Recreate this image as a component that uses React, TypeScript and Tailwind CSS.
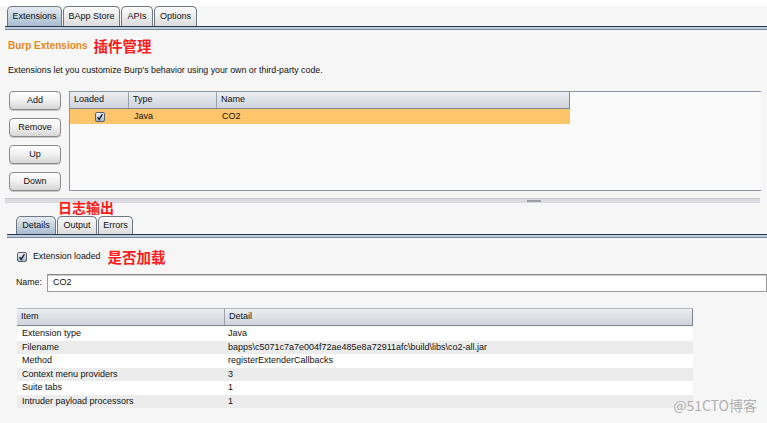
import React from "react";

const font = { fontFamily: '"Liberation Sans", Arial, "Noto Sans CJK SC", sans-serif' };
const cjk = { fontFamily: '"Noto Sans CJK SC", sans-serif' };

function Check() {
  return (
    <svg width="10" height="10" viewBox="0 0 10 10">
      <defs>
        <linearGradient id="cb" x1="0" y1="0" x2="0" y2="1">
          <stop offset="0" stopColor="#f4f7fb" />
          <stop offset="1" stopColor="#9fb3c9" />
        </linearGradient>
      </defs>
      <rect x="0.5" y="0.5" width="9" height="9" rx="1.5" fill="url(#cb)" stroke="#55606e" />
      <path d="M2.6 5.2 L4.2 7.4 L7.4 2.2" fill="none" stroke="#1a1f26" strokeWidth="1.4" />
    </svg>
  );
}

function Tab({ label, active, w }: { label: string; active?: boolean; w: string }) {
  return (
    <div
      className={`${w} h-full flex items-center justify-center rounded-t-[5px] border border-b-0 border-[#6f7782] text-[9px] text-[#111] ${
        active ? "bg-gradient-to-b from-[#e6ecf2] to-[#a7bbd0]" : "bg-gradient-to-b from-[#fbfbfb] to-[#dcdcdc]"
      }`}
    >
      {label}
    </div>
  );
}

function Btn({ label }: { label: string }) {
  return (
    <div className="w-[52px] h-[19px] rounded-[4px] border border-[#8a8a8a] bg-gradient-to-b from-[#ffffff] via-[#f0f0f0] to-[#d6d6d6] flex items-center justify-center text-[9px] text-[#111] shadow-[0_1px_0_#c8c8c8]">
      {label}
    </div>
  );
}

const rows: [string, string][] = [
  ["Extension type", "Java"],
  ["Filename", "bapps\\c5071c7a7e004f72ae485e8a72911afc\\build\\libs\\co2-all.jar"],
  ["Method", "registerExtenderCallbacks"],
  ["Context menu providers", "3"],
  ["Suite tabs", "1"],
  ["Intruder payload processors", "1"],
];

export default function App() {
  return (
    <div className="w-[767px] h-[423px] overflow-hidden bg-[#f6f6f6] relative text-[#111]" style={font}>
      <div className="h-[6px] bg-white" />
      {/* top tabs */}
      <div className="h-[20px] flex items-end pl-[7px] gap-[1px]">
        <Tab label="Extensions" active w="w-[55px]" />
        <Tab label="BApp Store" w="w-[57px]" />
        <Tab label="APIs" w="w-[32px]" />
        <Tab label="Options" w="w-[43px]" />
      </div>
      <div className="ml-[5px] h-[4px] border-t border-[#2e3846] bg-[#b9cde2] border-b border-b-[#7d8796]" />

      {/* header */}
      <div className="mt-[7px] pl-[8px] flex items-center h-[17px]">
        <span className="text-[10px] font-bold text-[#e5881c]">Burp Extensions</span>
        <span className="ml-[5px] text-[14.5px] leading-[16px] font-bold text-[#ff1a1a] bg-white px-[1px]" style={cjk}>
          插件管理
        </span>
      </div>
      <div className="mt-[11px] pl-[8px] text-[8.8px] leading-[10px]">
        Extensions let you customize Burp's behavior using your own or third-party code.
      </div>

      {/* main area */}
      <div className="mt-[16px] flex">
        <div className="ml-[9px] flex flex-col gap-[8px]">
          <Btn label="Add" />
          <Btn label="Remove" />
          <Btn label="Up" />
          <Btn label="Down" />
        </div>
        <div className="ml-[8px] w-[692px] h-[100px] border border-[#8f95a0] border-r-0 bg-[#fafafa]">
          <div className="w-[500px] h-[17px] flex text-[9px] bg-gradient-to-b from-[#eceef2] to-[#cfd3db] border-b border-r border-[#80868f]">
            <div className="w-[59px] pl-[4px] flex items-center border-r border-[#9aa0aa]">Loaded</div>
            <div className="w-[88px] pl-[4px] flex items-center border-r border-[#9aa0aa]">Type</div>
            <div className="flex-1 pl-[4px] flex items-center">Name</div>
          </div>
          <div className="w-[500px] h-[15px] flex items-center text-[9px] bg-[#ffc56b]">
            <div className="w-[59px] flex justify-center">
              <Check />
            </div>
            <div className="w-[88px] pl-[5px]">Java</div>
            <div className="flex-1 pl-[5px]">CO2</div>
          </div>
        </div>
      </div>

      {/* splitter */}
      <div className="mt-[7px] ml-[5px] w-[755px] h-[5px] bg-[#d9dbe0] border-t border-[#c4c7ce] flex justify-center">
        <div className="ml-[302px] w-[14px] h-[2px] mt-[1px] bg-[#9b9fa8]" />
      </div>

      {/* lower tabs */}
      <div className="relative mt-[13px] h-[18px] flex items-end pl-[16px] gap-[1px]">
        <Tab label="Details" active w="w-[40px]" />
        <Tab label="Output" w="w-[40px]" />
        <Tab label="Errors" w="w-[35px]" />
        <span
          className="absolute left-[58px] top-[-17px] text-[14px] leading-[16px] font-bold text-[#ff1a1a]"
          style={cjk}
        >
          日志输出
        </span>
      </div>
      <div className="ml-[7px] h-[4px] border-t border-[#2e3846] bg-[#b9cde2] border-b border-b-[#7d8796]" />

      {/* extension loaded */}
      <div className="mt-[10px] pl-[17px] flex items-center h-[18px]">
        <Check />
        <span className="ml-[6px] text-[8.8px]">Extension loaded</span>
        <span className="ml-[7px] text-[14.5px] leading-[16px] font-bold text-[#ff1a1a]" style={cjk}>
          是否加载
        </span>
      </div>

      {/* name */}
      <div className="mt-[8px] pl-[16px] flex items-center">
        <span className="text-[8.8px] w-[31px]">Name:</span>
        <div className="flex-1 h-[18px] bg-white border border-[#9a9a9a] border-t-[#8a8a8a] shadow-[inset_0_1px_1px_#c8c8c8] flex items-center pl-[5px] text-[9px]">
          CO2
        </div>
      </div>

      {/* detail table */}
      <div className="mt-[16px] ml-[17px] w-[676px] border-t border-[#b5b8be]">
        <div className="h-[17px] flex text-[9px] bg-gradient-to-b from-[#eceef2] to-[#cfd3db] border-b border-r border-[#80868f]">
          <div className="w-[208px] pl-[4px] flex items-center border-r border-[#9aa0aa]">Item</div>
          <div className="flex-1 pl-[4px] flex items-center">Detail</div>
        </div>
        <div className="pt-[1px]">
          {rows.map(([a, b], i) => (
            <div
              key={a}
              className={`h-[13.5px] flex items-center text-[9px] ${i % 2 === 0 ? "bg-white" : "bg-[#ececec]"}`}
            >
              <div className="w-[208px] pl-[5px]">{a}</div>
              <div className="flex-1 pl-[3px]">{b}</div>
            </div>
          ))}
        </div>
      </div>

      <div
        className="absolute right-[10px] bottom-[7px] text-[14px] text-[#b0b0b0]"
        style={{ fontFamily: '"Noto Sans CJK SC", "Liberation Sans", sans-serif' }}
      >
        @51CTO博客
      </div>
    </div>
  );
}
